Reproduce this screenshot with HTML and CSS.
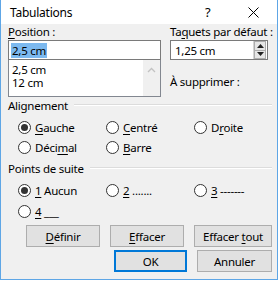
FILE: index.html
```html
<!DOCTYPE html>
<html lang="fr">
<head>
    <meta charset="UTF-8">
    <title>Tabulations</title>
    <link rel="stylesheet" href="styles.css">
</head>
<body>
    <div class="dialog">
        <div class="titlebar">
            <span class="title">Tabulations</span>
            <span class="help">?</span>
            <span class="close">
                <svg width="11" height="11" viewBox="0 0 11 11"><path d="M0.5 0.5 L10.5 10.5 M10.5 0.5 L0.5 10.5" stroke="#000" stroke-width="1"/></svg>
            </span>
        </div>
        <div class="content">
            <div class="top">
                <div class="col">
                    <div class="lbl"><u>P</u>osition :</div>
                    <div class="field"><span class="sel">2,5 cm</span></div>
                    <div class="listbox">
                        <div class="items">
                            <div>2,5 cm</div>
                            <div>12 cm</div>
                        </div>
                        <div class="scroll">
                            <svg width="9" height="6" viewBox="0 0 9 6"><path d="M1 5 L4.5 1.5 L8 5" fill="none" stroke="#c2c2c2" stroke-width="1.3"/></svg>
                        </div>
                    </div>
                </div>
                <div class="col">
                    <div class="lbl">Ta<u>q</u>uets par défaut :</div>
                    <div class="field spin">
                        <span>1,25 cm</span>
                        <div class="spin-btns">
                            <div class="spin-btn"><svg width="7" height="4" viewBox="0 0 7 4"><path d="M0 4 L3.5 0 L7 4 Z" fill="#222"/></svg></div>
                            <div class="spin-btn"><svg width="7" height="4" viewBox="0 0 7 4"><path d="M0 0 L3.5 4 L7 0 Z" fill="#222"/></svg></div>
                        </div>
                    </div>
                    <div class="lbl remove">À supprimer :</div>
                </div>
            </div>

            <div class="legend"><span>Alignement</span></div>
            <div class="radios">
                <div class="radio checked"><i></i><span><u>G</u>auche</span></div>
                <div class="radio"><i></i><span><u>C</u>entré</span></div>
                <div class="radio"><i></i><span>D<u>r</u>oite</span></div>
                <div class="radio"><i></i><span>Déci<u>m</u>al</span></div>
                <div class="radio"><i></i><span><u>B</u>arre</span></div>
            </div>

            <div class="legend second"><span>Points de suite</span></div>
            <div class="radios">
                <div class="radio checked"><i></i><span><u>1</u> Aucun</span></div>
                <div class="radio"><i></i><span><u>2</u> .......</span></div>
                <div class="radio"><i></i><span><u>3</u> -------</span></div>
                <div class="radio"><i></i><span><u>4</u> ___</span></div>
            </div>

            <div class="btn-row">
                <button class="btn"><u>D</u>éfinir</button>
                <button class="btn"><u>E</u>ffacer</button>
                <button class="btn wide">Effacer <u>t</u>out</button>
            </div>
            <div class="btn-row last">
                <button class="btn ok">OK</button>
                <button class="btn">Annuler</button>
            </div>
        </div>
    </div>
</body>
</html>
```

FILE: styles.css
```css
* {
    margin: 0;
    padding: 0;
    box-sizing: border-box;
}

body {
    background: #fff;
    font-family: 'Noto Sans', 'Open Sans', sans-serif;
    font-size: 11.5px;
    letter-spacing: -0.25px;
    color: #000;
}

u {
    text-decoration: underline;
    text-underline-offset: 2px;
}

.dialog {
    width: 278px;
    height: 280px;
    border: 1px solid #5ea6e6;
    border-top: none;
    background: #f0f0f0;
    display: flex;
    flex-direction: column;
}

.titlebar {
    height: 24px;
    background: #fff;
    display: flex;
    align-items: center;
    padding-left: 9px;
    font-size: 12px;
}

.title {
    flex: 1;
}

.help {
    width: 10px;
    margin-right: 33px;
    font-size: 13px;
}

.close {
    display: flex;
    margin-right: 18px;
}

.content {
    flex: 1;
    padding: 0 0 0 7px;
}

/* top part: position + default tabs */
.top {
    display: grid;
    grid-template-columns: 153px 98px;
    column-gap: 9px;
}

.lbl {
    height: 16px;
    line-height: 16px;
    white-space: nowrap;
}

.field {
    height: 20px;
    border: 1px solid #7a7a7a;
    background: #fff;
    display: flex;
    align-items: center;
    padding-left: 2px;
}

.sel {
    background: #7cb9ef;
    line-height: 15px;
    padding: 0 1px;
}

.spin {
    padding-left: 4px;
    justify-content: space-between;
}

.spin-btns {
    display: flex;
    flex-direction: column;
    height: 18px;
    width: 13px;
    margin-right: 1px;
    border-left: 1px solid #d4d4d4;
}

.spin-btn {
    flex: 1;
    display: flex;
    align-items: center;
    justify-content: center;
    background: #e6e6e6;
    border: 1px solid #adadad;
}

.spin-btn + .spin-btn {
    border-top: none;
}

.listbox {
    height: 37px;
    border: 1px solid #828790;
    border-top: none;
    background: #fff;
    display: flex;
}

.items {
    flex: 1;
    padding: 3px 0 0 3px;
    line-height: 13px;
}

.scroll {
    width: 17px;
    background: #f0f0f0;
    display: flex;
    justify-content: center;
    padding-top: 7px;
}

.remove {
    margin-top: 14px;
}

/* group headers with etched line */
.legend {
    display: flex;
    align-items: center;
    height: 16px;
    margin-right: 5px;
}

.legend::after {
    content: "";
    flex: 1;
    margin-left: 6px;
    border-top: 1px solid #dcdcdc;
    border-bottom: 1px solid #fff;
}

.second {
    margin-top: 3px;
}

.radios {
    display: grid;
    grid-template-columns: 88px 88px 88px;
    grid-auto-rows: 20px;
    row-gap: 0;
    padding-left: 10px;
    margin-top: 4px;
}

.legend.second + .radios {
    row-gap: 1px;
}

.radio {
    display: flex;
    align-items: center;
    white-space: nowrap;
}

.radio i {
    width: 13px;
    height: 13px;
    border: 1px solid #333;
    border-radius: 50%;
    background: #fff;
    margin-right: 4px;
    display: flex;
    align-items: center;
    justify-content: center;
}

.radio.checked i::after {
    content: "";
    width: 7px;
    height: 7px;
    border-radius: 50%;
    background: #333;
}

/* buttons */
.btn-row {
    display: flex;
    justify-content: flex-end;
    gap: 10px;
    margin-top: 4px;
    padding-right: 5px;
}

.btn-row.last {
    margin-top: 3px;
}

.btn {
    width: 74px;
    height: 22px;
    background: #e1e1e1;
    border: 1px solid #adadad;
    font-family: inherit;
    font-size: 11.5px;
    letter-spacing: -0.25px;
    color: #000;
}

.btn.wide {
    width: 78px;
}

.btn.ok {
    width: 73px;
    border: 2px solid #0078d7;
}

.btn-row.last .btn:last-child {
    width: 75px;
}
```
